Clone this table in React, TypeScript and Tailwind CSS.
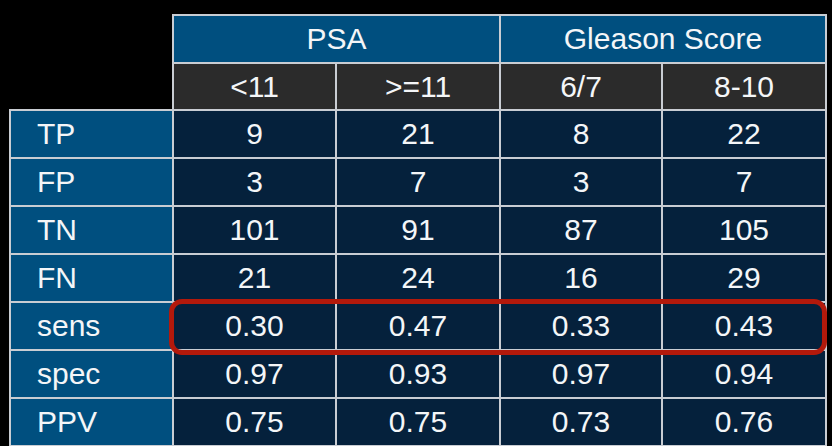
import React from "react";

const rows: [string, string[]][] = [
  ["TP", ["9", "21", "8", "22"]],
  ["FP", ["3", "7", "3", "7"]],
  ["TN", ["101", "91", "87", "105"]],
  ["FN", ["21", "24", "16", "29"]],
  ["sens", ["0.30", "0.47", "0.33", "0.43"]],
  ["spec", ["0.97", "0.93", "0.97", "0.94"]],
  ["PPV", ["0.75", "0.75", "0.73", "0.76"]],
];

const cell = "border-2 border-[#c9cdd3] p-0 text-center align-middle";

export default function App() {
  return (
    <div
      className="w-[832px] h-[446px] bg-black overflow-hidden pl-[9px] pt-[14px] text-[#f4f6f8]"
      style={{ fontFamily: '"Liberation Sans", Arial, sans-serif' }}
    >
      <div className="relative w-[816px]">
        <table className="border-collapse table-fixed w-[816px] text-[30px] leading-none">
          <colgroup>
            <col className="w-[163px]" />
            <col className="w-[163px]" />
            <col className="w-[164px]" />
            <col className="w-[162px]" />
            <col className="w-[164px]" />
          </colgroup>
          <thead>
            <tr className="h-[48px]">
              <th rowSpan={2} className="border-none bg-black p-0"></th>
              <th colSpan={2} className={`${cell} bg-[#004f7f] font-normal`}>PSA</th>
              <th colSpan={2} className={`${cell} bg-[#004f7f] font-normal`}>Gleason Score</th>
            </tr>
            <tr className="h-[47px]">
              {["<11", ">=11", "6/7", "8-10"].map((t) => (
                <th key={t} className={`${cell} bg-[#2b2b2b] font-normal`}>{t}</th>
              ))}
            </tr>
          </thead>
          <tbody>
            {rows.map(([label, vals]) => (
              <tr key={label} className="h-[48px]">
                <td className="border-2 border-[#c9cdd3] bg-[#004f7f] text-left pl-[26px] align-middle">{label}</td>
                {vals.map((v, i) => (
                  <td key={i} className={`${cell} bg-[#05213c]`}>{v}</td>
                ))}
              </tr>
            ))}
          </tbody>
        </table>
        <div className="absolute left-[160px] top-[285px] w-[658px] h-[56px] border-[5px] border-[#b3190b] rounded-[13px] pointer-events-none"></div>
      </div>
    </div>
  );
}
